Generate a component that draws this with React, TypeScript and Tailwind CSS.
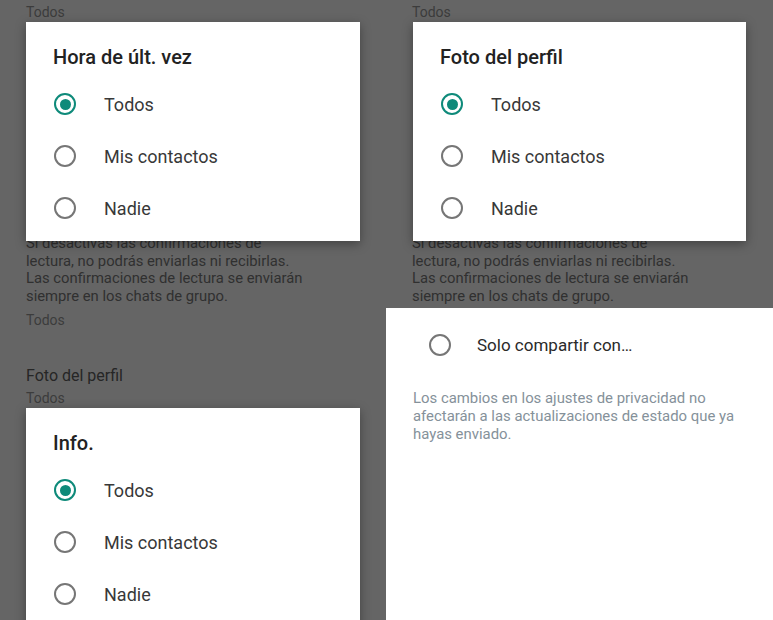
import React from "react";

const font = { fontFamily: "Roboto, 'Noto Sans', sans-serif" };

function Radio({ checked }: { checked?: boolean }) {
  return checked ? (
    <div className="w-[22px] h-[22px] rounded-full border-[2px] border-[#0e8a7a] flex items-center justify-center shrink-0">
      <div className="w-[11px] h-[11px] rounded-full bg-[#0e8a7a]" />
    </div>
  ) : (
    <div className="w-[22px] h-[22px] rounded-full border-[2px] border-[#767676] shrink-0" />
  );
}

function Dialog({ title, className }: { title: string; className: string }) {
  const opts = ["Todos", "Mis contactos", "Nadie"];
  return (
    <div className={"absolute bg-white shadow-[0_3px_10px_rgba(0,0,0,0.35)] " + className}>
      <div className="pt-[22px] pl-[27px] text-[20px] leading-[26px] font-medium text-[#222222]">{title}</div>
      <div className="mt-[8px]">
        {opts.map((o, i) => (
          <div key={o} className="h-[52px] flex items-center pl-[28px]">
            <Radio checked={i === 0} />
            <span className="ml-[28px] text-[18px] text-[#383838]">{o}</span>
          </div>
        ))}
      </div>
    </div>
  );
}

function Underlay({ full }: { full?: boolean }) {
  return (
    <div className="px-[26px] pt-[4px]">
      <div className="text-[14px] leading-[16px] text-[#3c3c3c]">Todos</div>
      <div className="mt-[215px] text-[14.8px] leading-[17.7px] text-[#303030] w-[320px]">
        Si desactivas las confirmaciones de
        <br />
        lectura, no podrás enviarlas ni recibirlas.
        <br />
        Las confirmaciones de lectura se enviarán
        <br />
        siempre en los chats de grupo.
      </div>
      {full && (
        <>
          <div className="mt-[6px] text-[14px] leading-[16px] text-[#3c3c3c]">Todos</div>
          <div className="mt-[39px] text-[16px] leading-[18px] text-[#262626]">Foto del perfil</div>
          <div className="mt-[5px] text-[14px] leading-[16px] text-[#3c3c3c]">Todos</div>
        </>
      )}
    </div>
  );
}

export default function App() {
  return (
    <div style={font} className="w-[773px] h-[620px] grid grid-cols-[386px_387px] overflow-hidden">
      <div className="relative bg-[#656565] overflow-hidden">
        <Underlay full />
        <Dialog title="Hora de últ. vez" className="left-[26px] top-[22px] w-[334px] h-[219px]" />
        <Dialog title="Info." className="left-[26px] top-[408px] w-[334px] h-[230px]" />
      </div>
      <div className="flex flex-col">
        <div className="relative h-[308px] bg-[#656565] overflow-hidden">
          <Underlay />
          <Dialog title="Foto del perfil" className="left-[27px] top-[22px] w-[333px] h-[219px]" />
        </div>
        <div className="flex-1 bg-white">
          <div className="flex items-center pl-[43px] pt-[26px]">
            <Radio />
            <span className="ml-[26px] text-[17px] leading-[22px] text-[#2a2a2a]">Solo compartir con…</span>
          </div>
          <div className="mt-[33px] px-[27px] text-[14.9px] leading-[18px] text-[#85919a]">
            Los cambios en los ajustes de privacidad no
            <br />
            afectarán a las actualizaciones de estado que ya
            <br />
            hayas enviado.
          </div>
        </div>
      </div>
    </div>
  );
}
